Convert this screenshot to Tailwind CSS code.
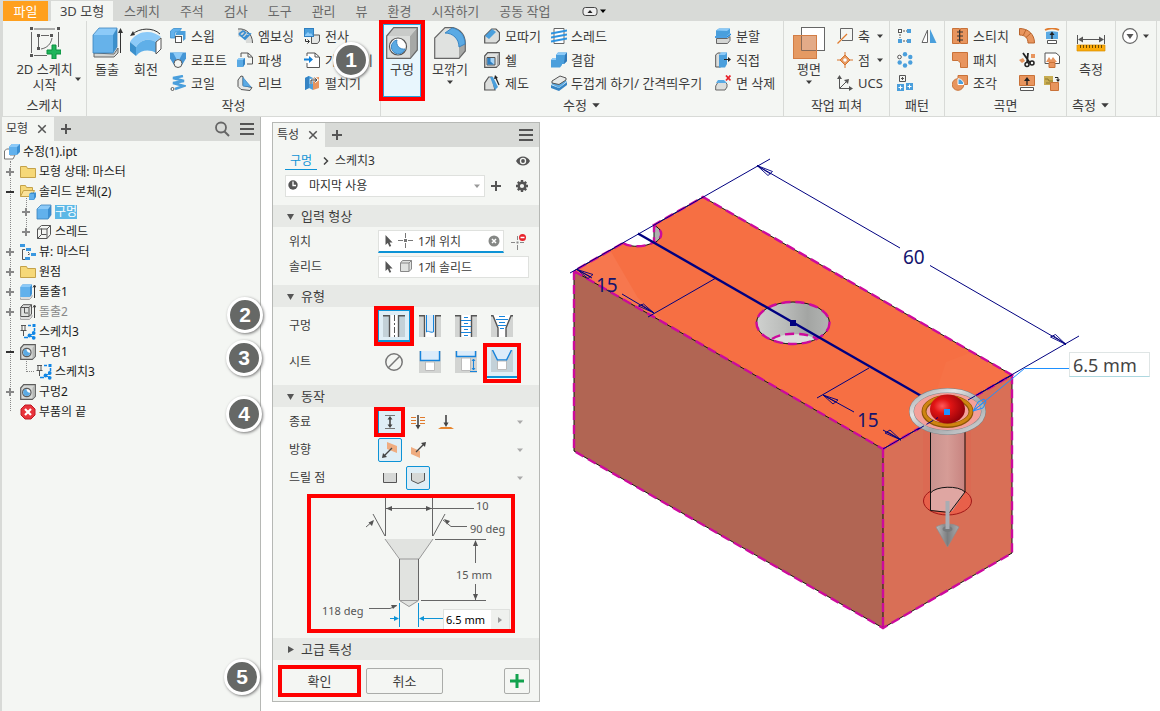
<!DOCTYPE html>
<html lang="ko">

<head>
    <meta charset="UTF-8" />
    <meta name="viewport" content="width=device-width, initial-scale=1.0">
    <title>수정(1).ipt</title>
    <script src="https://cdn.jsdelivr.net/npm/@tailwindcss/browser@4"></script>
</head>

<body class="relative min-h-screen flex flex-col bg-[#d8dad7] text-[#3c3c3c] font-['Noto_Sans','Noto_Sans_CJK_KR',sans-serif] whitespace-nowrap">

    <!-- Shared icons -->
    <svg class="hidden">
        <symbol id="i-cube" viewBox="0 0 16 16">
            <path d="M1 5l4-4h10l-3 4z" fill="#8ccaf8" />
            <path d="M1 5h11v10H1z" fill="#62b1ec" />
            <path d="M12 5l3-4v10l-3 4z" fill="#3b8fd2" />
            <path d="M1 5l4-4h10v10l-3 4H1z" fill="none" stroke="#3a83bd" stroke-width=".8" />
        </symbol>
        <symbol id="i-wire" viewBox="0 0 16 16">
            <path d="M1.500 5l4-3.500h9v9L11 14.500H1.500zM1.500 5H11v9.500M11 5l3.500-3.500M5.500 4.500v6h5M5.500 10.500l-4 4" fill="none" stroke="#555" />
        </symbol>
        <symbol id="i-folder" viewBox="0 0 16 16">
            <path d="M.5 13.500v-11h6l1 2h8v9z" fill="#f6d878" stroke="#c4a24a" />
        </symbol>
        <symbol id="i-sketch" viewBox="0 0 16 16">
            <path d="M1 1.500h5M2 2v4M5 2v4M.5 6.500h6M3.500 7v5" fill="none" stroke="#555" />
            <path d="M8 1.500h3M14.500 4v3M4 13.500h4" fill="none" stroke="#0f85e5" stroke-width="1.500" />
            <path d="M14 9.500L9 11.500l5 2" fill="none" stroke="#0f85e5" />
            <path d="M12.500 0h3v3h-3z" fill="#0f85e5" />
            <circle cx="13.700" cy="9" r="1.900" fill="#0f85e5" />
            <circle cx="9.500" cy="11.500" r="1.900" fill="#0f85e5" />
            <circle cx="13.700" cy="13.800" r="1.900" fill="#0f85e5" />
        </symbol>
        <symbol id="i-hole" viewBox="0 0 16 16">
            <path d="M.7 4l3-3.300h11.600v11.600l-3 3H.7z" fill="#d6d8d6" stroke="#5c5c5c" stroke-width="1.200" />
            <path d="M12.500 4l2.500-3v11l-2.500 3z" fill="#b4b6b4" />
            <circle cx="6.800" cy="8.500" r="4.200" fill="#fff" stroke="#5c5c5c" stroke-width="1.200" />
            <path d="M6.500 5a3.500 3.500 0 1 0 3.700 3.700A3.500 3.500 0 0 1 6.500 5z" fill="#5aaae4" />
        </symbol>
        <symbol id="i-caret" viewBox="0 0 8 8">
            <path d="M1 2.500h6L4 6z" fill="currentColor" />
        </symbol>
        <symbol id="i-plus" viewBox="0 0 12 12">
            <path d="M6 1v10M1 6h10" stroke="currentColor" stroke-width="2" />
        </symbol>
        <symbol id="i-expand" viewBox="0 0 10 10">
            <path d="M5 1v8M1 5h8" stroke="currentColor" stroke-width="2" />
        </symbol>
        <symbol id="i-close" viewBox="0 0 12 12">
            <path d="M1.500 1.500l9 9M10.500 1.500l-9 9" stroke="currentColor" stroke-width="1.800" />
        </symbol>
        <symbol id="i-menu" viewBox="0 0 14 14">
            <path d="M0 2h14M0 7h14M0 12h14" stroke="currentColor" stroke-width="2" />
        </symbol>
        <symbol id="i-cursor" viewBox="0 0 8 12">
            <path d="M.5 0v10l2.300-2L4.500 11.700l1.700-.8L4.600 7.500h3z" fill="#555" />
        </symbol>
        <symbol id="i-open" viewBox="0 0 9 9">
            <path d="M1 2h7L4.500 8z" fill="currentColor" />
        </symbol>
    </svg>

    <!-- Tabs -->
    <nav class="flex h-[21px] pt-px pl-[3px] text-[13px] leading-5 text-[#686868]">
        <a href="#" class="w-[45px] text-center bg-[#ffa01e] text-white">파일</a>
        <a href="#" class="w-[62px] ml-[3px] text-center bg-[#f4f6f3] text-[#444]">3D 모형</a>
        <div class="flex gap-5 ml-[11px]">
            <a href="#">스케치</a>
            <a href="#">주석</a>
            <a href="#">검사</a>
            <a href="#">도구</a>
            <a href="#">관리</a>
            <a href="#">뷰</a>
            <a href="#">환경</a>
            <a href="#">시작하기</a>
            <a href="#">공동 작업</a>
        </div>
        <button aria-label="리본 최소화" class="flex items-center ml-[31px] text-black">
            <svg class="w-4 h-5" viewBox="0 0 16 20">
                <rect x="1" y="6.500" width="14" height="8" rx="2.500" fill="#eee" stroke="#444" />
                <path d="M5.500 12h5L8 9z" fill="#222" />
            </svg>
            <svg class="w-2 h-2 ml-px"><use href="#i-caret" /></svg>
        </button>
    </nav>

    <!-- Ribbon -->
    <header class="flex ml-[3px] h-24 border-b border-[#d8dad7] bg-[#f4f6f3] text-[13px] leading-5">

        <section class="flex flex-col w-[84px] border-r border-[#d8dad7]">
            <div class="flex h-[74px] justify-center relative">
                <button class="flex flex-col items-center pt-[6px] leading-[15px]">
                    <svg class="w-8 h-8 mb-[3px]" viewBox="0 0 32 32">
                        <path d="M2.500 5v21M5 2h21M29.500 5v15M5 28.500h13M9.500 10v12M12 8.500h8M23 11c-1 6-5 10-11 11" fill="none" stroke="#666" />
                        <path d="M1 0h3v3H1zM28 0h3v3h-3zM1 27h3v3H1zM8 7h3v3H8zM21 7h3v3h-3zM8 20h3v3H8z" fill="#555" />
                        <path d="M23 18h4v5h5v4h-5v5h-4v-5h-5v-4h5z" fill="#1eb45a" stroke="#0b8f3f" />
                    </svg>
                    <span>2D 스케치<br>시작</span>
                </button>
                <svg class="absolute right-1 bottom-3 w-2 h-2"><use href="#i-caret" /></svg>
            </div>
            <h2 class="text-center">스케치</h2>
        </section>

        <section class="flex flex-col w-[294px] border-r border-[#d8dad7]">
            <div class="flex h-[74px]">
                <button class="flex flex-col items-center w-10 pt-[6px]">
                    <svg class="w-8 h-8" viewBox="0 0 32 32">
                        <path d="M3 26v4h20l4-4v-5L23 27z" fill="#d4d6d4" stroke="#666" />
                        <path d="M2 8l6-7h18l-3 7z" fill="#8ccaf8" />
                        <path d="M2 8h20v18H2z" fill="#66b2ea" />
                        <path d="M22 8l4-7v19l-4 6z" fill="#3b90cc" />
                        <path d="M2 8l6-7h18v19l-4 6H2z" fill="none" stroke="#3a83bd" stroke-width=".8" />
                        <path d="M29.500 26V3" stroke="#333" />
                        <path d="M27 6l2.500-5L32 6z" fill="#333" />
                    </svg>
                    <span>돌출</span>
                </button>
                <button class="flex flex-col items-center w-[38px] pt-[6px]">
                    <svg class="w-8 h-8" viewBox="0 0 32 32">
                        <path d="M0 15c4-7 11-10 17-10s10 2 14 5l-5 5c-7-4-15-3-20 5z" fill="#8ccaf8" />
                        <path d="M0 15l6 5v9l-6-5z" fill="#3b90cc" />
                        <path d="M6 20c5-8 13-9 20-5v11c-7-4-15-3-20 3z" fill="#5fafe8" />
                        <path d="M26 15l5-4v11l-5 5z" fill="#fff" stroke="#555" />
                        <path d="M3 7c6-6 20-7 27 0" fill="none" stroke="#333" />
                        <path d="M0 9l3-5 2 4z" fill="#333" />
                    </svg>
                    <span>회전</span>
                </button>
                <div class="flex flex-col w-[67px] ml-[5px] pt-[3px]">
                    <button class="flex items-center gap-[5px] h-6">
                        <svg class="w-4 h-4" viewBox="0 0 16 16">
                            <path d="M.5 3l3-2.500h8L9 4H5v6H.500z" fill="#62b1ec" stroke="#3a8fce" stroke-width=".8" />
                            <path d="M6 5l2-2h7.500v8L13 13V7H6z" fill="#4a9fdc" />
                            <rect x="5.500" y="8.500" width="6" height="6" fill="#fff" stroke="#555" />
                        </svg>
                        <span>스윕</span>
                    </button>
                    <button class="flex items-center gap-[5px] h-6">
                        <svg class="w-4 h-4" viewBox="0 0 16 16">
                            <path d="M0 .5h16v6L12 13H4L0 6.500z" fill="#4596d6" />
                            <path d="M3 .5h10L9 8H7z" fill="#8ccaf8" />
                            <circle cx="8" cy="11.500" r="4" fill="#f4f6f3" stroke="#555" />
                        </svg>
                        <span>로프트</span>
                    </button>
                    <button class="flex items-center gap-[5px] h-6">
                        <svg class="w-4 h-4" viewBox="0 0 16 16">
                            <path d="M13 1L3 3l11 3L3 8l11 3-9 3" fill="none" stroke="#4a9fdc" stroke-width="2.400" />
                            <circle cx="2.500" cy="14" r="1.500" fill="#fff" stroke="#555" />
                        </svg>
                        <span>코일</span>
                    </button>
                </div>
                <div class="flex flex-col w-[67px] pt-[3px]">
                    <button class="flex items-center gap-[5px] h-6">
                        <svg class="w-4 h-4" viewBox="0 0 16 16">
                            <path d="M1 1.500C9 0 15 6 15 15H9C9 10 6 8 1 9z" fill="#d9dbd9" />
                            <path d="M1 1C9 0 15.500 6 15.500 15" fill="none" stroke="#555" />
                            <path d="M2 6l6 5 5-5-3-1M5 8.500l4-4.500M7.500 10l3-3M2 6l4-3 2 1" fill="none" stroke="#3b8fd2" stroke-width="1.800" />
                        </svg>
                        <span>엠보싱</span>
                    </button>
                    <button class="flex items-center gap-[5px] h-6">
                        <svg class="w-4 h-4" viewBox="0 0 16 16">
                            <path d="M4 5V1h7l4.500 4v7H10" fill="none" stroke="#555" />
                            <path d="M11 1v4h4" fill="none" stroke="#555" />
                            <path d="M0 8l2-2h6v6l-2 3H0z" fill="#5aaae4" />
                            <path d="M0 8l2-2h6L6 8z" fill="#8ccaf8" />
                            <path d="M6 8l2-2v6l-2 3z" fill="#3584c4" />
                        </svg>
                        <span>파생</span>
                    </button>
                    <button class="flex items-center gap-[5px] h-6">
                        <svg class="w-4 h-4" viewBox="0 0 16 16">
                            <path d="M1 5l3-4 2 .5v9l9 2-2 3-9-1-3-3z" fill="#e4e6e4" stroke="#555" />
                            <path d="M6 2.500L14 12l-8-1z" fill="#5aaae4" stroke="#3584c4" stroke-width=".7" />
                        </svg>
                        <span>리브</span>
                    </button>
                </div>
                <div class="flex flex-col pt-[3px]">
                    <button class="flex items-center gap-[5px] h-6">
                        <svg class="w-4 h-4" viewBox="0 0 16 16">
                            <path d="M7.500 15.500V9l2-2h6v6l-2 2.500z" fill="#e4e6e4" stroke="#555" />
                            <rect x=".5" y=".5" width="9" height="8" fill="#4a9fdc" stroke="#2f7fc0" />
                            <path d="M1 7l3-3 2 2 1-1 2 3H1z" fill="#8ccaf8" />
                            <path d="M1.500 11v2.500H5M3.500 11.500l2 2-2 2" fill="none" stroke="#333" />
                        </svg>
                        <span>전사</span>
                    </button>
                    <button class="flex items-center gap-[5px] h-6">
                        <svg class="w-4 h-4" viewBox="0 0 16 16">
                            <path d="M3 4V1h8l4.500 4v10.500H3V11" fill="#fff" stroke="#555" />
                            <path d="M11 1v4h4" fill="none" stroke="#555" />
                            <path d="M0 6.500h5v-2.500l4 3.500-4 3.500V8.500H0z" fill="#1080d8" />
                        </svg>
                        <span>가져오기</span>
                    </button>
                    <button class="flex items-center gap-[5px] h-6">
                        <svg class="w-4 h-4" viewBox="0 0 16 16">
                            <path d="M1 3l4-2 4 2v12l-4-2-4 2z" fill="#4a9fdc" />
                            <path d="M5 1v12l-4 2V3z" fill="#3584c4" />
                            <path d="M9 3l6-1v11l-6 2z" fill="#e8955e" />
                            <path d="M7 9V5h5M10.500 3l2.500 2-2.500 2" fill="none" stroke="#fff" stroke-width="2.500" />
                            <path d="M7 9V5h5M10.500 3l2.500 2-2.500 2" fill="none" stroke="#333" />
                        </svg>
                        <span>펼치기</span>
                    </button>
                </div>
            </div>
            <h2 class="text-center">작성</h2>
        </section>

        <section class="flex flex-col w-[403px] border-r border-[#d8dad7]">
            <div class="flex h-[74px] pl-[2px]">
                <button class="relative flex flex-col items-center w-[38px] h-[73px] mt-[3px] pt-[2px] border border-[#22a4df] bg-[#e8f6fd]">
                    <span class="absolute -inset-[5px] border-4 border-[#ff0000]"></span>
                    <svg class="w-8 h-8" viewBox="0 0 32 32">
                        <path d="M.7 9l7-8.300h23.600V23l-7 8.300H.7z" fill="#dcdedc" />
                        <path d="M24 9l7-8v22l-7 8z" fill="#a6a8a6" />
                        <path d="M1 9l7-8h23l-7 8z" fill="#c9cbc9" />
                        <path d="M.7 9l7-8.300h23.600V23l-7 8.300H.7z" fill="none" stroke="#666" stroke-width="1.200" />
                        <circle cx="12" cy="19.500" r="8.500" fill="#fff" stroke="#555" stroke-width="1.200" />
                        <path d="M11 13a7 7 0 1 0 8 9 7 7 0 0 1-8-9z" fill="#5aaae4" stroke="#3a86c4" />
                    </svg>
                    <span>구멍</span>
                </button>
                <button class="flex flex-col items-center w-[38px] ml-[10px] pt-[6px]">
                    <svg class="w-8 h-8" viewBox="0 0 32 32">
                        <path d="M.7 31.300V11L11 .7h10L31 12v12l-6 7.300z" fill="#e0e2e0" />
                        <path d="M25 19l6-3v8l-6 7z" fill="#a6a8a6" />
                        <path d="M.7 31.300V11L11 .7h8C27 3 31 9 31.300 16v8L25 31.300z" fill="none" stroke="#666" stroke-width="1.200" />
                        <path d="M11 6l7-5c8 1 13 8 13 16l-6 3C25 12 19 6 11 6z" fill="#5aaae4" stroke="#3a86c4" />
                    </svg>
                    <span>모깎기</span>
                    <svg class="w-2 h-2 -mt-px"><use href="#i-caret" /></svg>
                </button>
                <div class="flex flex-col w-[67px] ml-[15px] pt-[3px]">
                    <button class="flex items-center gap-[5px] h-6">
                        <svg class="w-4 h-4" viewBox="0 0 16 16">
                            <path d="M.7 15V8l7-7H12l3.500 3.500V12l-3 3z" fill="#dcdedc" stroke="#555" stroke-width="1.200" />
                            <path d="M1 8l7-7 4 3-7 7z" fill="#4a9fdc" />
                        </svg>
                        <span>모따기</span>
                    </button>
                    <button class="flex items-center gap-[5px] h-6">
                        <svg class="w-4 h-4" viewBox="0 0 16 16">
                            <path d="M.7 4l3-3.300h11.600v11.600l-3 3H.7z" fill="#e0e2e0" stroke="#555" stroke-width="1.200" />
                            <path d="M13 4l2-3v11l-2 3z" fill="#aaa" />
                            <path d="M3 5.500h8V13H3z" fill="#a6d4f6" stroke="#555" />
                            <path d="M3.500 6v6.500h6.500L6.500 9.500V6z" fill="#2f7fc0" />
                        </svg>
                        <span>쉘</span>
                    </button>
                    <button class="flex items-center gap-[5px] h-6">
                        <svg class="w-4 h-4" viewBox="0 0 16 16">
                            <path d="M.7 15V8l4-6H8l3 13z" fill="#dcdedc" stroke="#555" stroke-width="1.200" />
                            <path d="M6 2h3l5 10-3 3z" fill="#4a9fdc" />
                            <path d="M15 10L11.500 2" stroke="#222" stroke-width="1.200" />
                            <path d="M10 4l1-4 3 3z" fill="#222" />
                        </svg>
                        <span>제도</span>
                    </button>
                </div>
                <div class="flex flex-col w-[164px] pt-[3px]">
                    <button class="flex items-center gap-1 h-6">
                        <svg class="w-4 h-4" viewBox="0 0 16 16">
                            <path d="M3 .5h10v15H3z" fill="#fff" stroke="#666" />
                            <path d="M0 5.500l16-3M0 9.500l16-3M0 13.500l16-3" stroke="#2f93df" stroke-width="1.800" />
                        </svg>
                        <span>스레드</span>
                    </button>
                    <button class="flex items-center gap-1 h-6">
                        <svg class="w-4 h-4" viewBox="0 0 16 16">
                            <path d="M5 3l2-2.500h9V9l-3 3h-2v1l-2 2.500H0V8l2-2h3z" fill="#4a9fdc" />
                            <path d="M5 3l2-2.500h9L14 3zM0 8l2-2h3v2z" fill="#8ccaf8" />
                            <path d="M14 3l2-2.500V9l-3 3z" fill="#3078b8" />
                        </svg>
                        <span>결합</span>
                    </button>
                    <button class="flex items-center gap-1 h-6">
                        <svg class="w-4 h-4" viewBox="0 0 16 16">
                            <path d="M0 10l8 3 8-6v3l-8 6-8-3z" fill="#3584c4" />
                            <path d="M0 9l8-5 8 2-8 7z" fill="#5aaae4" />
                            <path d="M1 6l8-5 6 2v2L8 9.500 1 8z" fill="#e8eae8" stroke="#555" />
                        </svg>
                        <span>두껍게 하기/ 간격띄우기</span>
                    </button>
                </div>
                <div class="flex flex-col pt-[3px]">
                    <button class="flex items-center gap-[5px] h-6">
                        <svg class="w-4 h-4" viewBox="0 0 16 16">
                            <path d="M1 2.500L4 .5h11v5L12 8H1z" fill="#4a9fdc" />
                            <path d="M1 2.500L4 .5h11L12 3z" fill="#8ccaf8" />
                            <path d="M1.500 10.500h11l2.500-2v4l-2.500 3h-11z" fill="#d4d6d4" stroke="#666" />
                            <path d="M0 9h12l4-3" fill="none" stroke="#1684dc" stroke-width="1.300" />
                        </svg>
                        <span>분할</span>
                    </button>
                    <button class="flex items-center gap-[5px] h-6">
                        <svg class="w-4 h-4" viewBox="0 0 16 16">
                            <path d="M.7 15V3l2-2h3v14z" fill="#dcdedc" stroke="#555" />
                            <path d="M4 3l2-2.500h6V12l-2 3.500H4z" fill="#4a9fdc" />
                            <path d="M4 3l2-2.500h6L10 3z" fill="#8ccaf8" />
                            <path d="M9 7.500h5" stroke="#222" />
                            <path d="M13 5l3 2.500-3 2.500z" fill="#222" />
                        </svg>
                        <span>직접</span>
                    </button>
                    <button class="flex items-center gap-[5px] h-6">
                        <svg class="w-4 h-4" viewBox="0 0 16 16">
                            <path d="M.7 15v-4l3-5H9l3 3v3l-2 3z" fill="#dcdedc" stroke="#666" />
                            <path d="M3 5h6l3 3H1z" fill="#5aaae4" />
                            <path d="M11 .5l4.500 5M15.500 .5L11 5.500" stroke="#e8232b" stroke-width="1.800" />
                        </svg>
                        <span>면 삭제</span>
                    </button>
                </div>
            </div>
            <h2 class="flex justify-center items-center gap-1">수정 <svg class="w-[10px] h-[10px]"><use href="#i-caret" /></svg></h2>
        </section>

        <section class="flex flex-col w-[106px] border-r border-[#d8dad7]">
            <div class="flex h-[74px]">
                <button class="flex flex-col items-center w-[50px] pt-[6px]">
                    <svg class="w-8 h-8" viewBox="0 0 32 32">
                        <rect x="8.500" y=".5" width="23" height="23" fill="#fff" stroke="#666" />
                        <rect x=".5" y="8.500" width="23" height="23" fill="#e59a63" stroke="#d27d45" />
                        <path d="M9 9h14v14H9z" fill="#e3ab88" />
                        <path d="M8.500 9v14.500H23" fill="none" stroke="#8a6a56" />
                    </svg>
                    <span>평면</span>
                    <svg class="w-2 h-2 -mt-px"><use href="#i-caret" /></svg>
                </button>
                <div class="flex flex-col w-[47px] ml-[3px] pt-[3px]">
                    <button class="flex items-center gap-[5px] h-6">
                        <svg class="w-4 h-4" viewBox="0 0 16 16">
                            <path d="M3.500 11V.500h12v12H5" fill="none" stroke="#666" />
                            <path d="M.5 15.500L10 6" stroke="#e07b2e" stroke-width="1.300" />
                        </svg>
                        <span>축</span>
                        <svg class="w-2 h-2 ml-auto"><use href="#i-caret" /></svg>
                    </button>
                    <button class="flex items-center gap-[5px] h-6">
                        <svg class="w-4 h-4" viewBox="0 0 16 16">
                            <path d="M8 0v16M0 8h16" stroke="#d8742c" />
                            <path d="M8 3l5 5-5 5-5-5z" fill="#e59a63" stroke="#d8742c" />
                            <circle cx="8" cy="8" r="1.800" fill="#fff" />
                        </svg>
                        <span>점</span>
                        <svg class="w-2 h-2 ml-auto"><use href="#i-caret" /></svg>
                    </button>
                    <button class="flex items-center gap-[5px] h-6">
                        <svg class="w-4 h-4" viewBox="0 0 16 16">
                            <path d="M2.500 2v11.500H14M3 13l7-7" fill="none" stroke="#555" />
                            <path d="M0 4L2.500 0 5 4zM12 11l4 2.500-4 2.500zM7 5l5-1-1 5z" fill="#555" />
                        </svg>
                        <span>UCS</span>
                    </button>
                </div>
            </div>
            <h2 class="text-center">작업 피쳐</h2>
        </section>

        <section class="flex flex-col w-[55px] border-r border-[#d8dad7]">
            <div class="flex h-[74px] gap-2 pl-[7px]">
                <div class="flex flex-col pt-[3px]">
                    <button aria-label="직사각형 패턴" class="flex items-center h-6">
                        <svg class="w-4 h-4" viewBox="0 0 16 16">
                            <path d="M6 3h4M3 6v4M6 13h4" stroke="#555" stroke-dasharray="2 1" />
                            <rect x="1.500" y="1.500" width="3" height="3" fill="#fff" stroke="#555" />
                            <path d="M10 1h4v4h-4zM1 11h4v4H1zM10 11h4v4h-4z" fill="#4a9fdc" />
                        </svg>
                    </button>
                    <button aria-label="원형 패턴" class="flex items-center h-6">
                        <svg class="w-4 h-4" viewBox="0 0 16 16">
                            <circle cx="2.500" cy="5" r="1.800" fill="#fff" stroke="#555" />
                            <g fill="#4a9fdc">
                                <circle cx="8" cy="2.200" r="2.200" />
                                <circle cx="13.300" cy="5" r="2.200" />
                                <circle cx="13.300" cy="10.500" r="2.200" />
                                <circle cx="8" cy="13.500" r="2.200" />
                                <circle cx="2.700" cy="10.500" r="2.200" />
                            </g>
                        </svg>
                    </button>
                    <button aria-label="스케치 연계 패턴" class="flex items-center h-6">
                        <svg class="w-4 h-4" viewBox="0 0 16 16">
                            <path d="M2.500 .5h6v6h-6zM5.500 2v3M4 3.500h3" fill="none" stroke="#555" />
                            <path d="M0 9h7v7H0zM9 8h7v7H9z" fill="#4a9fdc" />
                            <path d="M3.500 10.500v4M1.500 12.500h4M12.500 9.500v4M10.500 11.500h4" stroke="#fff" />
                        </svg>
                    </button>
                </div>
                <div class="pt-[3px]">
                    <button aria-label="미러" class="flex items-center h-6">
                        <svg class="w-4 h-4" viewBox="0 0 16 16">
                            <path d="M6.500 2v12.500H1z" fill="#fff" stroke="#666" />
                            <path d="M9 1l6.500 14H9z" fill="#4a9fdc" />
                        </svg>
                    </button>
                </div>
            </div>
            <h2 class="text-center">패턴</h2>
        </section>

        <section class="flex flex-col w-[122px] border-r border-[#d8dad7]">
            <div class="flex h-[74px] pl-[7px]">
                <div class="flex flex-col w-[67px] pt-[3px]">
                    <button class="flex items-center gap-[5px] h-6">
                        <svg class="w-4 h-4" viewBox="0 0 16 16">
                            <path d="M.5 .5h7v15h-7zM8.500 .5h7v15h-7z" fill="#e8955e" stroke="#c97238" />
                            <path d="M7.500 2v12M5 4h6M5 8h6M5 12h6" stroke="#333" />
                        </svg>
                        <span>스티치</span>
                    </button>
                    <button class="flex items-center gap-[5px] h-6">
                        <svg class="w-4 h-4" viewBox="0 0 16 16">
                            <path d="M.5 .5h15v15h-7V11L6 8.500H.5z" fill="#e8955e" stroke="#c97238" />
                        </svg>
                        <span>패치</span>
                    </button>
                    <button class="flex items-center gap-[5px] h-6">
                        <svg class="w-4 h-4" viewBox="0 0 16 16">
                            <path d="M6 .5h9.500v9H6z" fill="#e8955e" stroke="#c97238" />
                            <circle cx="6" cy="9.500" r="5.800" fill="#e8955e" stroke="#c97238" />
                            <path d="M6 3.700a5.800 5.800 0 0 1 5.800 5.800H6z" fill="#4a9fdc" stroke="#fff" />
                        </svg>
                        <span>조각</span>
                    </button>
                </div>
                <div class="flex flex-col pt-[3px]">
                    <button aria-label="연장" class="flex items-center h-6">
                        <svg class="w-4 h-4" viewBox="0 0 16 16">
                            <path d="M.5 .5C9 .5 15.500 6 15.500 15H9C9 10 6 7 .5 7z" fill="#e8955e" stroke="#b9642c" />
                            <path d="M7 1.500L4.500 7M12 5L7 9.500" stroke="#b9642c" />
                        </svg>
                    </button>
                    <button aria-label="자르기" class="flex items-center h-6">
                        <svg class="w-4 h-4" viewBox="0 0 16 16">
                            <path d="M12 2h4v4h-4zM0 8l4-2 2 3-3 2z" fill="#e8955e" />
                            <path d="M4 1l7 10M9 1L8 11" stroke="#222" stroke-width="1.800" />
                            <circle cx="8" cy="12.500" r="2" fill="none" stroke="#222" stroke-width="1.500" />
                            <circle cx="13" cy="11" r="2" fill="none" stroke="#222" stroke-width="1.500" />
                        </svg>
                    </button>
                    <button aria-label="면 대체" class="flex items-center h-6">
                        <svg class="w-4 h-4" viewBox="0 0 16 16">
                            <path d="M.5 .5h15v10H.5z" fill="#e8955e" stroke="#c97238" />
                            <path d="M8 10V5" stroke="#222" stroke-width="1.300" />
                            <path d="M5 6l3-4 3 4z" fill="#222" />
                            <path d="M1.500 12.500h13v3h-13z" fill="#fff" stroke="#555" />
                        </svg>
                    </button>
                </div>
                <div class="flex flex-col ml-[9px] pt-[3px]">
                    <button aria-label="맞춤" class="flex items-center h-6">
                        <svg class="w-4 h-4" viewBox="0 0 16 16">
                            <path d="M1 2c4-2 10-2 14 0" fill="none" stroke="#e07b2e" stroke-width="1.800" />
                            <path d="M2 4c4-1 8-1 12 0v7H2z" fill="#5aaae4" />
                            <path d="M8 11V6" stroke="#222" stroke-width="1.300" />
                            <path d="M5.500 7L8 3.500 10.500 7z" fill="#222" />
                            <path d="M3.500 12.500h9v3h-9z" fill="#fff" stroke="#555" />
                        </svg>
                    </button>
                    <button aria-label="메쉬 맞춤" class="flex items-center h-6">
                        <svg class="w-4 h-4" viewBox="0 0 16 16">
                            <path d="M1 11.500V1h11l3.500 3v7.500z" fill="#fff" stroke="#555" />
                            <path d="M2 10l3-5 2 3 2-3 4 5z" fill="#e8955e" />
                            <path d="M5 10.500h6v5H5z" fill="#e8955e" stroke="#c97238" />
                        </svg>
                    </button>
                    <button aria-label="솔리드로 변환" class="flex items-center h-6">
                        <svg class="w-4 h-4" viewBox="0 0 16 16">
                            <path d="M0 1h9v9H0z" fill="#c8ad52" />
                            <path d="M1 4h3l1 2h4M2 8h4" fill="none" stroke="#8f7a30" />
                            <path d="M11 2.500h3V5" fill="none" stroke="#222" />
                            <path d="M12 4.500h4L14 7z" fill="#222" />
                            <path d="M6.500 7.500h8v8h-8z" fill="#e8955e" stroke="#c97238" />
                        </svg>
                    </button>
                </div>
            </div>
            <h2 class="text-center">곡면</h2>
        </section>

        <section class="flex flex-col w-[49px] border-r border-[#d8dad7]">
            <div class="flex justify-center h-[74px]">
                <button class="flex flex-col items-center pt-[6px]">
                    <svg class="w-8 h-8" viewBox="0 0 32 32">
                        <path d="M2.500 8v9M29.500 8v9M5 12.500h22" stroke="#555" />
                        <path d="M3 12.500l5-3v6zM29 12.500l-5-3v6z" fill="#555" />
                        <path d="M2 18h28v6H2z" fill="#fbab0a" stroke="#d98e00" stroke-width=".7" />
                        <path d="M5.500 18v3M8.500 18v3M11.500 18v3M14.500 18v3M17.500 18v3M20.500 18v3M23.500 18v3M26.500 18v3" stroke="#6b4a00" />
                    </svg>
                    <span>측정</span>
                </button>
            </div>
            <h2 class="flex justify-center items-center gap-1">측정 <svg class="w-[10px] h-[10px]"><use href="#i-caret" /></svg></h2>
        </section>

        <section class="flex w-[41px] border-r border-[#d8dad7]">
            <button aria-label="패널 표시" class="flex items-center gap-1 h-[30px] pl-[6px]">
                <svg class="w-4 h-4" viewBox="0 0 16 16">
                    <circle cx="8" cy="8" r="7.300" fill="#fff" stroke="#666" stroke-width="1.200" />
                    <path d="M4.500 6h7L8 11z" fill="#555" />
                </svg>
                <svg class="w-2 h-2"><use href="#i-caret" /></svg>
            </button>
        </section>
    </header>

    <div class="flex flex-1 pl-[2px]">

        <!-- Model browser -->
        <aside class="w-[259px] shrink-0 border-r border-[#b6b8b5] bg-[#f4f6f3] text-[12px] leading-5 text-[#1a1a1a]">
            <div class="flex items-center h-6 bg-[#d8dad7] text-[#555]">
                <div class="flex items-center w-[52px] h-6 pl-1 bg-[#f4f6f3]">
                    <span class="text-[#3c3c3c]">모형</span>
                    <button aria-label="닫기" class="ml-[9px]"><svg class="w-[10px] h-[10px]"><use href="#i-close" /></svg></button>
                </div>
                <button aria-label="탭 추가" class="ml-[6px]"><svg class="w-3 h-3"><use href="#i-plus" /></svg></button>
                <button aria-label="검색" class="ml-auto">
                    <svg class="w-4 h-4" viewBox="0 0 16 16">
                        <circle cx="7" cy="6.500" r="5" fill="none" stroke="#666" stroke-width="1.800" />
                        <path d="M10.500 10.500l4.500 4.500" stroke="#666" stroke-width="2" />
                    </svg>
                </button>
                <button aria-label="메뉴" class="ml-[10px] mr-[6px]"><svg class="w-[14px] h-[14px]"><use href="#i-menu" /></svg></button>
            </div>

            <ul class="relative pt-px">
                <li class="absolute left-2 top-5 h-[250px] border-l border-dotted border-[#888]"></li>
                <li class="absolute left-6 top-[54px] h-[34px] border-l border-dotted border-[#888]"></li>
                <li class="absolute left-6 top-[220px] w-2 h-[11px] border-l border-b border-dotted border-[#888]"></li>
                <li class="relative flex items-center h-5 pl-[2px]">
                    <svg class="w-4 h-4 mr-[3px]" viewBox="0 0 16 16">
                        <path d="M.5 7l2-2H6v6h5l-2 4H.5z" fill="#fff" stroke="#777" />
                        <path d="M5 3l3-3h8v8l-3 3H5z" fill="#3b8fd2" />
                        <path d="M5 3h8v8H5z" fill="#62b1ec" />
                        <path d="M5 3l3-3h8l-3 3z" fill="#8ccaf8" />
                    </svg>
                    수정(1).ipt
                </li>
                <li class="relative flex items-center h-5">
                    <span class="flex justify-center w-4 mr-[2px] text-[#888]"><svg class="w-[10px] h-[10px] bg-[#f4f6f3]"><use href="#i-expand" /></svg></span>
                    <svg class="w-4 h-4 mr-[3px]"><use href="#i-folder" /></svg>모형 상태: 마스터
                </li>
                <li class="relative flex items-center h-5">
                    <span class="flex justify-center w-4 mr-[2px]"><span class="w-2 h-[2px] bg-[#333]"></span></span>
                    <svg class="w-4 h-4 mr-[3px]" viewBox="0 0 16 16">
                        <path d="M.5 12.500V1.500h5l1 2h6v3" fill="#f6d878" stroke="#c4a24a" />
                        <path d="M.5 12.500l3-6h11l-3 6z" fill="#fae29a" stroke="#c4a24a" />
                        <path d="M9 10l2-1.500h5V13l-2 3H9z" fill="#3b8fd2" />
                        <path d="M9 10h5v5.500H9z" fill="#62b1ec" />
                    </svg>솔리드 본체(2)
                </li>
                <li class="relative flex items-center h-5 pl-4">
                    <span class="flex justify-center w-4 mr-[2px] text-[#888]"><svg class="w-[10px] h-[10px] bg-[#f4f6f3]"><use href="#i-expand" /></svg></span>
                    <svg class="w-4 h-4 mr-[3px]"><use href="#i-cube" /></svg><span class="h-[14px] leading-[14px] bg-[#5cb8e6] text-white">구멍</span>
                </li>
                <li class="relative flex items-center h-5 pl-4">
                    <span class="flex justify-center w-4 mr-[2px] text-[#888]"><svg class="w-[10px] h-[10px] bg-[#f4f6f3]"><use href="#i-expand" /></svg></span>
                    <svg class="w-4 h-4 mr-[3px]"><use href="#i-wire" /></svg>스레드
                </li>
                <li class="relative flex items-center h-5">
                    <span class="flex justify-center w-4 mr-[2px] text-[#888]"><svg class="w-[10px] h-[10px] bg-[#f4f6f3]"><use href="#i-expand" /></svg></span>
                    <svg class="w-4 h-4 mr-[3px]" viewBox="0 0 16 16">
                        <path d="M5 5.500H2.500v10H5" fill="none" stroke="#555" />
                        <path d="M8.500 6v6M9 10h2" fill="none" stroke="#555" stroke-dasharray="1 1" />
                        <path d="M0 0h5v3H0zM6 4h5v3H6zM11 9h5v3h-5zM5 13h5v3H5z" fill="#3b98e0" />
                    </svg>뷰: 마스터
                </li>
                <li class="relative flex items-center h-5">
                    <span class="flex justify-center w-4 mr-[2px] text-[#888]"><svg class="w-[10px] h-[10px] bg-[#f4f6f3]"><use href="#i-expand" /></svg></span>
                    <svg class="w-4 h-4 mr-[3px]"><use href="#i-folder" /></svg>원점
                </li>
                <li class="relative flex items-center h-5">
                    <span class="flex justify-center w-4 mr-[2px] text-[#888]"><svg class="w-[10px] h-[10px] bg-[#f4f6f3]"><use href="#i-expand" /></svg></span>
                    <svg class="w-4 h-4 mr-[3px]" viewBox="0 0 16 16">
                        <path d="M.5 13.500v2h9l2.500-2.500v-2" fill="#ddd" stroke="#aaa" />
                        <path d="M.5 3l2-2.500h9.500V10l-2 3H.5z" fill="#3b8fd2" />
                        <path d="M.5 3H10v10H.5z" fill="#62b1ec" />
                        <path d="M.5 3l2-2.500h9.500L10 3z" fill="#8ccaf8" />
                        <path d="M14.500 14V2M13 3.500L14.500 1 16 3.500" fill="none" stroke="#333" />
                    </svg>돌출1
                </li>
                <li class="relative flex items-center h-5 text-[#888]">
                    <span class="flex justify-center w-4 mr-[2px]"><svg class="w-[10px] h-[10px] bg-[#f4f6f3]"><use href="#i-expand" /></svg></span>
                    <svg class="w-4 h-4 mr-[3px]" viewBox="0 0 16 16">
                        <path d="M.5 13.500v2h9l2.500-2.500v-2" fill="#ddd" stroke="#aaa" />
                        <path d="M.7 3.500l2.500-2.800h8.300V10L9 12.500H.7zM.7 3.500H9v9M9 3.500l2.500-2.800M4.500 3.500v5.500H8" fill="#dfe1df" stroke="#555" />
                        <path d="M14.500 14V2M13 3.500L14.500 1 16 3.500" fill="none" stroke="#444" />
                    </svg>돌출2
                </li>
                <li class="relative flex items-center h-5 pl-[18px]">
                    <svg class="w-4 h-4 mr-[3px]"><use href="#i-sketch" /></svg>스케치3
                </li>
                <li class="relative flex items-center h-5">
                    <span class="flex justify-center w-4 mr-[2px]"><span class="w-2 h-[2px] bg-[#333]"></span></span>
                    <svg class="w-4 h-4 mr-[3px]"><use href="#i-hole" /></svg>구멍1
                </li>
                <li class="relative flex items-center h-5 pl-[34px]">
                    <svg class="w-4 h-4 mr-[3px]"><use href="#i-sketch" /></svg>스케치3
                </li>
                <li class="relative flex items-center h-5">
                    <span class="flex justify-center w-4 mr-[2px] text-[#888]"><svg class="w-[10px] h-[10px] bg-[#f4f6f3]"><use href="#i-expand" /></svg></span>
                    <svg class="w-4 h-4 mr-[3px]"><use href="#i-hole" /></svg>구멍2
                </li>
                <li class="relative flex items-center h-5 pl-[18px]">
                    <svg class="w-4 h-4 mr-[3px]" viewBox="0 0 16 16">
                        <path d="M5 1h6l4 4v6l-4 4H5l-4-4V5z" fill="#e8343c" stroke="#c01a24" />
                        <path d="M5 5l6 6M11 5l-6 6" stroke="#fff" stroke-width="2.200" />
                    </svg>부품의 끝
                </li>
            </ul>
        </aside>

        <main class="flex flex-1 items-start bg-white">

            <!-- Properties panel -->
            <form class="w-[268px] shrink-0 ml-[11px] mt-[5px] border border-[#b6b8b5] bg-[#f4f6f3] text-[12px] leading-5">
                <div class="flex items-center h-6 bg-[#d8dad7] text-[#555]">
                    <div class="flex items-center w-[52px] h-6 pl-1 bg-[#f4f6f3]">
                        <span class="text-[#3c3c3c]">특성</span>
                        <button type="button" aria-label="닫기" class="ml-[9px]"><svg class="w-[10px] h-[10px]"><use href="#i-close" /></svg></button>
                    </div>
                    <button type="button" aria-label="탭 추가" class="ml-[6px]"><svg class="w-3 h-3"><use href="#i-plus" /></svg></button>
                    <button type="button" aria-label="메뉴" class="ml-auto mr-[6px]"><svg class="w-[14px] h-[14px]"><use href="#i-menu" /></svg></button>
                </div>

                <div class="flex items-center h-7 pl-3 pr-[9px] text-[#333]">
                    <a href="#" class="w-8 h-[18px] leading-[18px] text-center border-b border-[#0d93d6] text-[#0d93d6]">구멍</a>
                    <svg class="w-2 h-2 mx-[5px]" viewBox="0 0 8 8"><path d="M2 .5L5.500 4 2 7.500" fill="none" stroke="#444" stroke-width="1.500" /></svg>
                    <span>스케치3</span>
                    <button type="button" aria-label="미리보기" class="ml-auto">
                        <svg class="w-[14px] h-[14px]" viewBox="0 0 14 14">
                            <path d="M0 7c3-6 11-6 14 0-3 6-11 6-14 0z" fill="#555" />
                            <circle cx="7" cy="7" r="3.200" fill="#f4f6f3" />
                            <circle cx="7" cy="7" r="1.900" fill="#555" />
                        </svg>
                    </button>
                </div>

                <div class="flex items-center h-[22px] pl-3 pr-[10px] mb-2 text-[#555]">
                    <div class="relative w-[200px]">
                        <select aria-label="사전 설정" class="appearance-none w-full h-[22px] pl-[23px] border border-[#dfe1de] bg-white text-[#333]">
                            <option>마지막 사용</option>
                        </select>
                        <svg class="absolute left-[3px] top-[5px] w-[10px] h-[10px]" viewBox="0 0 10 10">
                            <circle cx="5" cy="5" r="4.700" fill="#555" />
                            <path d="M5 1.500V5.500h3" fill="none" stroke="#fff" stroke-width="1.300" />
                        </svg>
                        <svg class="absolute right-1 top-[7px] w-2 h-2 text-[#999]"><use href="#i-caret" /></svg>
                    </div>
                    <button type="button" aria-label="사전 설정 추가" class="ml-[5px]"><svg class="w-3 h-3"><use href="#i-plus" /></svg></button>
                    <button type="button" aria-label="설정" class="ml-auto">
                        <svg class="w-[14px] h-[14px]" viewBox="0 0 14 14">
                            <path d="M7 1v12M1 7h12M2.800 2.800l8.400 8.400M11.200 2.800l-8.400 8.400" stroke="#555" stroke-width="2.400" />
                            <circle cx="7" cy="7" r="3.300" fill="#f4f6f3" stroke="#555" stroke-width="2.400" />
                        </svg>
                    </button>
                </div>

                <h3 class="flex items-center gap-[6px] h-[22px] pl-[13px] bg-[#e7e9e6] text-[13px]"><svg class="w-[9px] h-[9px] text-[#555]"><use href="#i-open" /></svg>입력 형상</h3>
                <div class="flex flex-col gap-[3px] pt-[3px] pb-[7px] pl-4">
                    <div class="flex items-center h-[23px]">
                        <label for="position" class="w-[89px]">위치</label>
                        <div class="relative w-[126px]">
                            <input id="position" type="text" value="1개 위치" class="block w-full h-[23px] pl-[39px] border border-[#dfe1de] border-b-2 border-b-[#0d93d6] bg-white">
                            <svg class="absolute left-[7px] top-[5px] w-2 h-3"><use href="#i-cursor" /></svg>
                            <svg class="absolute left-5 top-[3px] w-4 h-4" viewBox="0 0 16 16">
                                <path d="M7.500 0v5M7.500 10v5M0 7.500h5M10 7.500h5" stroke="#777" />
                                <path d="M6 6h3v3H6z" fill="#777" />
                            </svg>
                            <button type="button" aria-label="지우기" class="absolute right-1 top-[5px]">
                                <svg class="w-3 h-3" viewBox="0 0 12 12">
                                    <circle cx="6" cy="6" r="5.500" fill="#858785" />
                                    <path d="M4 4l4 4M8 4L4 8" stroke="#fff" stroke-width="1.500" />
                                </svg>
                            </button>
                        </div>
                        <button type="button" aria-label="중심점 제외" class="ml-[7px]">
                            <svg class="w-4 h-4" viewBox="0 0 16 16">
                                <path d="M6.500 2v4M6.500 11v5M0 8.500h4M9 8.500h4" stroke="#888" />
                                <path d="M5.500 7.500h2v2h-2z" fill="#888" />
                                <circle cx="11.500" cy="3.500" r="3.500" fill="#e8232b" />
                                <path d="M9.500 3.500h4" stroke="#fff" stroke-width="1.500" />
                            </svg>
                        </button>
                    </div>
                    <div class="flex items-center h-[22px]">
                        <label for="solid" class="w-[89px]">솔리드</label>
                        <div class="relative w-[151px]">
                            <input id="solid" type="text" value="1개 솔리드" class="block w-full h-[22px] pl-[39px] border border-[#dfe1de] bg-white">
                            <svg class="absolute left-[7px] top-[5px] w-2 h-3"><use href="#i-cursor" /></svg>
                            <svg class="absolute left-[22px] top-1 w-3 h-3" viewBox="0 0 12 12">
                                <path d="M.5 3l2-2.500h9V9l-2.500 2.500H.5zM.5 3H9v8.500M9 3l2.500-2.500" fill="#e0e2e0" stroke="#888" />
                            </svg>
                        </div>
                    </div>
                </div>

                <h3 class="flex items-center gap-[6px] h-[22px] pl-[13px] bg-[#e7e9e6] text-[13px]"><svg class="w-[9px] h-[9px] text-[#555]"><use href="#i-open" /></svg>유형</h3>
                <div class="pt-px pb-[5px] pl-4">
                    <div class="flex items-center gap-1 h-9">
                        <span class="w-[85px]">구멍</span>
                        <button type="button" aria-label="단순 구멍" class="relative flex items-center justify-center w-8 h-8 border border-[#0d93d6] border-b-2 bg-[#dfeef6]">
                            <span class="absolute -inset-[5px] -bottom-[6px] border-4 border-[#ff0000]"></span>
                            <svg class="w-[22px] h-[22px]" viewBox="0 0 22 22">
                                <path d="M0 1h7v21H0zM15 1h7v21h-7z" fill="#c3d1d8" />
                                <path d="M7 0h8v22H7z" fill="#fff" />
                                <path d="M0 .7h6.500V22M22 .7h-6.500V22" fill="none" stroke="#555" stroke-width="1.400" />
                                <path d="M11.500 0v22" stroke="#555" stroke-dasharray="6 2 2 2" />
                            </svg>
                        </button>
                        <button type="button" aria-label="틈새 구멍" class="flex items-center justify-center w-8 h-8">
                            <svg class="w-[22px] h-[22px]" viewBox="0 0 22 22">
                                <path d="M0 1h22v21H0z" fill="#d2d4d2" />
                                <path d="M5 0h12v22H5z" fill="#fff" />
                                <path d="M0 .7h5.500V22M22 .7h-5.500V22" fill="none" stroke="#555" stroke-width="1.400" />
                                <path d="M7.500 0v17c2-2 3 1 7 0V0" fill="#dcecfa" stroke="#1684dc" />
                            </svg>
                        </button>
                        <button type="button" aria-label="탭 구멍" class="flex items-center justify-center w-8 h-8">
                            <svg class="w-[22px] h-[22px]" viewBox="0 0 22 22">
                                <path d="M0 1h22v21H0z" fill="#d2d4d2" />
                                <path d="M5 0h12v22H5z" fill="#fff" />
                                <path d="M0 .7h5.500V22M22 .7h-5.500V22" fill="none" stroke="#555" stroke-width="1.400" />
                                <path d="M9 2.500h4M6 5.500h10M9 8.500h4M6 11.500h10M9 14.500h4M6 17.500h10M9 20.500h4" stroke="#1684dc" />
                            </svg>
                        </button>
                        <button type="button" aria-label="테이퍼 탭 구멍" class="flex items-center justify-center w-8 h-8">
                            <svg class="w-[22px] h-[22px]" viewBox="0 0 22 22">
                                <path d="M0 1h22v21H0z" fill="#d2d4d2" />
                                <path d="M2 0h18l-5 12v10H7V12z" fill="#fff" />
                                <path d="M0 .7h2L7 13v9M22 .7h-2L15 13v9" fill="none" stroke="#555" stroke-width="1.400" />
                                <path d="M8 1.500h6M5 4.500h12M8 7.500h6M7 10.500h8M9 13.500h4" stroke="#1684dc" />
                            </svg>
                        </button>
                    </div>
                    <div class="flex items-center gap-1 h-9">
                        <span class="w-[85px]">시트</span>
                        <button type="button" aria-label="없음" class="flex items-center justify-center w-8 h-8">
                            <svg class="w-[18px] h-[18px]" viewBox="0 0 18 18">
                                <circle cx="9" cy="9" r="8.200" fill="none" stroke="#777" stroke-width="1.500" />
                                <path d="M3.300 14.700L14.700 3.300" stroke="#777" stroke-width="1.500" />
                            </svg>
                        </button>
                        <button type="button" aria-label="카운터보어" class="flex items-center justify-center w-8 h-8">
                            <svg class="w-[22px] h-[22px]" viewBox="0 0 22 22">
                                <path d="M0 0h22v22H0z" fill="#d2d4d2" />
                                <path d="M1.500 0v9.500h19V0" fill="#dcecfa" stroke="#1684dc" stroke-width="1.400" />
                                <path d="M6.500 11h9v8.500h-9z" fill="#fff" stroke="#bbb" />
                            </svg>
                        </button>
                        <button type="button" aria-label="접촉 공간" class="flex items-center justify-center w-8 h-8">
                            <svg class="w-[22px] h-[22px]" viewBox="0 0 22 22">
                                <path d="M0 0h22v22H0z" fill="#d2d4d2" />
                                <path d="M1.500 0v5.500h19V0" fill="#dcecfa" stroke="#1684dc" stroke-width="1.400" />
                                <path d="M6.500 7h9v12.500h-9z" fill="#fff" stroke="#bbb" />
                                <path d="M18.500 8v11M15 20.500h7M17 10l1.500-2L20 10M17 17l1.500 2L20 17" fill="none" stroke="#1684dc" />
                            </svg>
                        </button>
                        <button type="button" aria-label="카운터싱크" class="relative flex items-center justify-center w-8 h-8 border-b-2 border-[#0d93d6] bg-[#dfeef6]">
                            <span class="absolute -inset-x-[3px] -top-[3px] -bottom-[7px] border-4 border-[#ff0000]"></span>
                            <svg class="w-[22px] h-[22px]" viewBox="0 0 22 22">
                                <path d="M0 0h22v22H0z" fill="#c3d1d8" />
                                <path d="M1.500 0l5 10h9l5-10" fill="#dcecfa" stroke="#1684dc" stroke-width="1.400" />
                                <path d="M6.500 11h9v8.500h-9z" fill="#fff" stroke="#bbb" />
                            </svg>
                        </button>
                    </div>
                </div>

                <h3 class="flex items-center gap-[6px] h-[22px] pl-[13px] bg-[#e7e9e6] text-[13px]"><svg class="w-[9px] h-[9px] text-[#555]"><use href="#i-open" /></svg>동작</h3>
                <div class="pt-px pl-4 pr-[15px]">
                    <div class="flex items-center gap-1 h-7">
                        <span class="w-[85px]">종료</span>
                        <button type="button" aria-label="거리" class="relative flex items-center justify-center w-6 h-6 border border-[#0d93d6] bg-[#dfeef6]">
                            <span class="absolute -inset-y-[4px] -left-[5px] -right-[4px] border-4 border-[#ff0000]"></span>
                            <svg class="w-4 h-4" viewBox="0 0 16 16">
                                <path d="M3 1.500h10M3 14.500h10" stroke="#777" />
                                <path d="M8 4v8" stroke="#444" stroke-width="1.600" />
                                <path d="M5.500 5.500L8 2l2.500 3.500zM5.500 10.500L8 14l2.500-3.500z" fill="#444" />
                            </svg>
                        </button>
                        <button type="button" aria-label="전체 관통" class="flex items-center justify-center w-6 h-6">
                            <svg class="w-4 h-4" viewBox="0 0 16 16">
                                <path d="M1 3.500h5M1 6.500h5M1 9.500h5M10 3.500h5M10 6.500h5M10 9.500h5" stroke="#e07b2e" />
                                <path d="M8 1v11" stroke="#444" stroke-width="1.600" />
                                <path d="M5.500 11h5L8 15.500z" fill="#444" />
                            </svg>
                        </button>
                        <button type="button" aria-label="지정 면까지" class="flex items-center justify-center w-6 h-6">
                            <svg class="w-4 h-4" viewBox="0 0 16 16">
                                <path d="M0 15l3-2h10l3 2z" fill="#e8862e" />
                                <path d="M8 1v8" stroke="#444" stroke-width="1.600" />
                                <path d="M5.500 8.500h5L8 13z" fill="#444" />
                            </svg>
                        </button>
                        <svg class="w-2 h-2 ml-auto text-[#aaa]"><use href="#i-caret" /></svg>
                    </div>
                    <div class="flex items-center gap-1 h-7">
                        <span class="w-[85px]">방향</span>
                        <button type="button" aria-label="기본값" class="flex items-center justify-center w-6 h-6 border border-[#0d93d6] rounded-[2px] bg-[#dfeef6]">
                            <svg class="w-4 h-4" viewBox="0 0 16 16">
                                <path d="M5 0l10 4v7L5 7z" fill="#efac80" />
                                <path d="M10 6l-8 8" stroke="#444" stroke-width="1.300" />
                                <path d="M0 16l1-5 4 4z" fill="#444" />
                            </svg>
                        </button>
                        <button type="button" aria-label="반전" class="flex items-center justify-center w-6 h-6">
                            <svg class="w-4 h-4" viewBox="0 0 16 16">
                                <path d="M1 5l9 4v7L1 12z" fill="#efac80" />
                                <path d="M6 10l8-8" stroke="#444" stroke-width="1.300" />
                                <path d="M16 0l-1 5-4-4z" fill="#444" />
                            </svg>
                        </button>
                        <svg class="w-2 h-2 ml-auto text-[#aaa]"><use href="#i-caret" /></svg>
                    </div>
                    <div class="flex items-center gap-1 h-7">
                        <span class="w-[85px]">드릴 점</span>
                        <button type="button" aria-label="평면" class="flex items-center justify-center w-6 h-6">
                            <svg class="w-4 h-4" viewBox="0 0 16 16"><path d="M1.500 3v9.500h13V3" fill="#d6d8d6" stroke="#555" /></svg>
                        </button>
                        <button type="button" aria-label="각도" class="flex items-center justify-center w-6 h-6 border border-[#0d93d6] rounded-[2px] bg-[#dfeef6]">
                            <svg class="w-4 h-4" viewBox="0 0 16 16"><path d="M1.500 3v7.500l6.500 3 6.500-3V3" fill="#d6d8d6" stroke="#555" /></svg>
                        </button>
                        <svg class="w-2 h-2 ml-auto text-[#aaa]"><use href="#i-caret" /></svg>
                    </div>
                </div>

                <!-- Hole dimensions -->
                <div class="relative w-[208px] h-[139px] ml-[34px] mt-[2px] mb-[5px] border-4 border-[#ff0000]">
                    <svg class="block w-[200px] h-[131px] text-[11px]" viewBox="311 498 200 131">
                        <path d="M385 539h48l-14 20v42l-9.500 6-9.500-6v-42z" fill="#e1e3e0" />
                        <path d="M385 539l14.500 20h19.500L433 539M399.500 600.500h19l-9.500 6-9.500-6" fill="none" stroke="#999" />
                        <path d="M385.500 498v38M432.500 498v38M386 508.500h88M399.500 559v41M418.500 559v41M373 514l12 22M445 514l-12 22M435 539.500h51M421 600.500h65M475.500 541v22M475.500 584v16M451 526.500h16M443 520l8 6.500M366 527l7-6M369 608.500h21l7-3" fill="none" stroke="#666" />
                        <path d="M386 508.500l6-2.500v5zM432 508.500l-6-2.500v5zM475.500 540l-2.500 6h5zM475.500 600l-2.500-6h5zM444 519l6 2-3 3.500zM374 520l-2 6-3.500-3.500zM397 605l-6 0 2 4z" fill="#555" />
                        <path d="M399.500 603v24M418.500 603v24M390 618.500h8M420 618.500h24" stroke="#0d93d6" />
                        <path d="M399 618.500l-5-2.500v5zM419 618.500l5-2.500v5z" fill="#0d93d6" />
                        <g fill="#555">
                            <text x="476" y="510">10</text>
                            <text x="470" y="533">90 deg</text>
                            <text x="456" y="579">15 mm</text>
                            <text x="322" y="615">118 deg</text>
                        </g>
                    </svg>
                    <div class="absolute right-px bottom-0 flex h-5 border border-b-0 border-[#dfe1de]">
                        <input aria-label="지름" type="text" value="6.5 mm" class="w-[47px] pl-[2px] text-[11px] bg-white text-black">
                        <button type="button" aria-label="값 옵션" class="flex items-center justify-center w-[18px] bg-[#eff1ee]">
                            <svg class="w-[6px] h-[6px]" viewBox="0 0 6 6"><path d="M1 0l4 3-4 3z" fill="#999" /></svg>
                        </button>
                    </div>
                </div>

                <h3 class="flex items-center gap-[6px] h-[22px] pl-[13px] bg-[#e7e9e6] text-[13px]"><svg class="w-[9px] h-[9px] text-[#555]" viewBox="0 0 9 9"><path d="M2 1v7l6-3.500z" fill="currentColor" /></svg>고급 특성</h3>
                <div class="flex items-center h-[41px] pl-2 pr-[9px] text-[13px]">
                    <button type="button" class="relative w-[77px] h-[26px] border border-[#aaaca9] bg-[#f4f6f3]">
                        <span class="absolute -inset-[4px] border-4 border-[#ff0000]"></span>확인
                    </button>
                    <button type="button" class="w-[77px] h-[26px] ml-2 border border-[#aaaca9] rounded-[2px]">취소</button>
                    <button type="button" aria-label="새 구멍 작성" class="flex items-center justify-center w-[26px] h-[26px] ml-auto border border-[#aaaca9] rounded-[2px]">
                        <svg class="w-4 h-4" viewBox="0 0 16 16"><path d="M8 1v14M1 8h14" stroke="#12a24e" stroke-width="3" /></svg>
                    </button>
                </div>
            </form>

            <!-- Graphics window -->
            <div class="relative flex-1">
                <svg class="block w-full" viewBox="540 117 620 594">
                    <defs>
                        <linearGradient id="bore" x1="0" x2="1">
                            <stop offset="0" stop-color="#cfd1cf" />
                            <stop offset=".4" stop-color="#b9bbb9" />
                            <stop offset=".7" stop-color="#a3a5a3" />
                            <stop offset="1" stop-color="#b3b5b3" />
                        </linearGradient>
                        <linearGradient id="shaft" x1="0" x2="1">
                            <stop offset="0" stop-color="#c9928e" />
                            <stop offset=".5" stop-color="#d69c96" />
                            <stop offset="1" stop-color="#c88480" />
                        </linearGradient>
                        <linearGradient id="silver" x1="0" x2="1" y2="1">
                            <stop offset="0" stop-color="#9fa3a6" />
                            <stop offset=".3" stop-color="#e2e4e5" />
                            <stop offset=".6" stop-color="#a3a7aa" />
                            <stop offset="1" stop-color="#d4d7d9" />
                        </linearGradient>
                        <linearGradient id="cone" x1="0" x2="1">
                            <stop offset="0" stop-color="#b9bbbd" />
                            <stop offset=".5" stop-color="#7b7d7f" />
                            <stop offset="1" stop-color="#a9abad" />
                        </linearGradient>
                        <radialGradient id="ball" cx=".35" cy=".4" r=".7">
                            <stop offset="0" stop-color="#ff5a5a" />
                            <stop offset=".35" stop-color="#e01414" />
                            <stop offset="1" stop-color="#8c0008" />
                        </radialGradient>
                        <path id="edges" d="M653 225.500L703 197L1012 375L883 449L574 271L624 242.500M574 271V451L883 628L1012 553V375M883 449V628" />
                        <path id="notch" d="M623 243C631 248 646 247 654 242V225.500C663 229 664 238 654 243" />
                    </defs>

                    <!-- Block -->
                    <path d="M574 271L703 197L1012 375L883 449z" fill="#f66f43" />
                    <path d="M574 271l36-21l28 48l33 29z" fill="#f7774e" />
                    <path d="M883 449l129-74-40-23-26 10-20 60z" fill="#f67246" />
                    <path d="M574 271L883 449V628L574 451z" fill="#b16553" />
                    <path d="M883 449L1012 375V553L883 628z" fill="#d96f56" />

                    <!-- Edge notch and through hole -->
                    <path d="M623 243C631 248 646 247 654 242V225.500L650 222L620 240z" fill="#fff" />
                    <path d="M654 225.500C663 229 664 238 654 243z" fill="#aeb0ae" />
                    <ellipse cx="793" cy="323" rx="36.500" ry="21" fill="url(#bore)" />
                    <path d="M772 339.500C782 332.500 806 332.500 817 339C805 345 783 345.500 772 339.500z" fill="#dcdedc" />
                    <g fill="none" stroke="#111">
                        <use href="#edges" />
                        <use href="#notch" />
                        <ellipse cx="793" cy="323" rx="36.500" ry="21" />
                    </g>
                    <g fill="none" stroke="#cc0a9c" stroke-width="2.400" stroke-dasharray="9 5">
                        <use href="#edges" />
                        <use href="#notch" />
                        <ellipse cx="793" cy="323" rx="36.500" ry="21" />
                        <path d="M772 339C782 332 806 332 817 339" />
                    </g>

                    <!-- Sketch and dimensions -->
                    <g fill="none" stroke="#000080">
                        <path d="M638 233.500L930 401" stroke-width="2.400" />
                        <path d="M570 273L770 159M883 449L1079 336M757 165.500L900 248M930 265.500L1066 344M622 294L654 313M577 269.500L592 278M648 317L716 278M869 368L817 398M823 395L854 412M883 430L901 440" />
                        <path d="M757 165.500l15.500 6-4.500 4zM757 165.500l13.500 8.500M1066 344.500l-15.500-7.500 5-2.500zM1066 344.500l-13-9M577 269.500l16 5-5 4zM577 269.500l13 7M654 313l-15.500-7 5-2zM654 313l-13-8.500M901 440l-16-7 5-3zM901 440l-13-8M823 395l15 5-5 4zM823 395l13 7" stroke-width=".9" />
                        <path d="M790 320h6v6h-6z" fill="#000080" stroke="none" />
                    </g>
                    <g class="text-[19px]" fill="#14146e">
                        <text x="903" y="264">60</text>
                        <text x="596" y="292">15</text>
                        <text x="857" y="427">15</text>
                    </g>

                    <!-- Hole preview -->
                    <path d="M923 421h48v80h-48z" fill="#e0604c" fill-opacity=".35" />
                    <ellipse cx="947.500" cy="501" rx="24" ry="14" fill="#e8604a" stroke="#a01818" />
                    <path d="M930.500 425h34v68l-12 18-22-1z" fill="url(#shaft)" />
                    <path d="M930.500 493c5-7 28-8 34.500-1l-15 20-19.500-2z" fill="#dfa6a2" />
                    <path d="M930.500 425v85.500l19 2L965 492v-67M930.500 493c5-7 28-8 34.500-1" fill="none" stroke="#111" />
                    <path d="M936 527c6-4 18-4 23 0l-11.500 20z" fill="url(#cone)" stroke="#8b8d8f" stroke-width=".7" />
                    <ellipse cx="947.500" cy="529" rx="5" ry="3" fill="#77797b" />
                    <path d="M945.500 501h4v28h-4z" fill="#a9adb3" />
                    <ellipse cx="947.500" cy="411.500" rx="36" ry="21" fill="#f4a09a" stroke="#7f8386" stroke-width="5" />
                    <ellipse cx="947.500" cy="411.500" rx="36" ry="21" fill="none" stroke="url(#silver)" stroke-width="4" />
                    <ellipse cx="947.500" cy="411.500" rx="23.500" ry="14" fill="#f4a09a" stroke="#8c5606" stroke-width="5" />
                    <ellipse cx="947.500" cy="411" rx="23.500" ry="14" fill="none" stroke="#cf8410" stroke-width="3" />
                    <ellipse cx="947.500" cy="409" rx="17.500" ry="14.500" fill="url(#ball)" />
                    <path d="M944 409h6v6h-6z" fill="#1e90ff" />
                    <path d="M917 430L938 417.500M968 400L1012 375" stroke="#000080" stroke-dasharray="8 3" />

                    <!-- Leader -->
                    <path d="M1069 368.500H1024.500L973 411M973 411l5-9 6-3 2 3-3 6zM973 411l11-9" fill="none" stroke="#1e90ff" />
                </svg>
                <input aria-label="구멍 지름" type="text" value="6.5 mm" class="absolute left-[529px] top-[235px] w-[81px] h-[25px] pt-[2px] pl-[3px] text-[18px] border border-[#dfe5e5] border-b-[#add8e0] bg-white text-[#444]">
            </div>
        </main>
    </div>

    <!-- Step markers -->
    <span class="absolute left-[333px] top-[42px] w-9 h-9 rounded-full border-3 border-white bg-[#666866] shadow-[1px_1px_3px_#777] text-center text-[21px] leading-[30px] font-['Liberation_Sans',sans-serif] font-bold text-white">1</span>
    <span class="absolute left-[227px] top-[297px] w-9 h-9 rounded-full border-3 border-white bg-[#666866] shadow-[1px_1px_3px_#777] text-center text-[21px] leading-[30px] font-['Liberation_Sans',sans-serif] font-bold text-white">2</span>
    <span class="absolute left-[226px] top-[340px] w-9 h-9 rounded-full border-3 border-white bg-[#666866] shadow-[1px_1px_3px_#777] text-center text-[21px] leading-[30px] font-['Liberation_Sans',sans-serif] font-bold text-white">3</span>
    <span class="absolute left-[226px] top-[396px] w-9 h-9 rounded-full border-3 border-white bg-[#666866] shadow-[1px_1px_3px_#777] text-center text-[21px] leading-[30px] font-['Liberation_Sans',sans-serif] font-bold text-white">4</span>
    <span class="absolute left-[224px] top-[659px] w-9 h-9 rounded-full border-3 border-white bg-[#666866] shadow-[1px_1px_3px_#777] text-center text-[21px] leading-[30px] font-['Liberation_Sans',sans-serif] font-bold text-white">5</span>

</body>

</html>
